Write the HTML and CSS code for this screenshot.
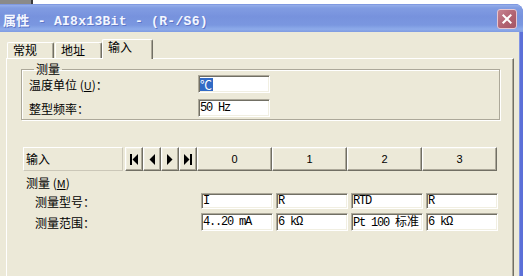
FILE: index.html
```html
<!DOCTYPE html>
<html lang="zh">
<head>
<meta charset="utf-8">
<link rel="stylesheet" href="styles.css">
</head>
<body>
<div class="topstrip"><span class="ts-gray"></span><span class="ts-line"></span></div>
<div class="window">
  <div class="titlebar">
    <span class="title">属性 - AI8x13Bit - (R-/S6)</span>
    <span class="close">
      <svg width="20" height="20" viewBox="0 0 20 20"><path d="M6 6 L14 14 M14 6 L6 14" stroke="#fff" stroke-width="2.2" stroke-linecap="square"/></svg>
    </span>
  </div>
  <div class="client">
    <div class="tabs">
      <div class="tab tab-1">常规</div>
      <div class="tab tab-2">地址</div>
      <div class="tab tab-active">输入</div>
    </div>
    <div class="pane">
      <fieldset class="group">
        <legend>测量</legend>
        <div class="form">
          <span class="lbl">温度单位 (<u>U</u>)：</span><span class="field"><span class="sel">℃</span></span>
          <span class="lbl">整型频率：</span><span class="field">50 Hz</span>
        </div>
      </fieldset>
      <div class="navrow">
        <div class="hcell">输入</div>
        <div class="navbtns">
          <div class="btn nav"><svg width="8" height="11" viewBox="0 0 8 11"><rect x="0" y="0" width="2" height="11"/><polygon points="8,0 8,11 2.5,5.5"/></svg></div>
          <div class="btn nav"><svg width="6" height="11" viewBox="0 0 6 11"><polygon points="6,0 6,11 0.5,5.5"/></svg></div>
          <div class="btn nav"><svg width="6" height="11" viewBox="0 0 6 11"><polygon points="0,0 0,11 5.5,5.5"/></svg></div>
          <div class="btn nav"><svg width="8" height="11" viewBox="0 0 8 11"><polygon points="0,0 0,11 5.5,5.5"/><rect x="6" y="0" width="2" height="11"/></svg></div>
        </div>
        <div class="btn col">0</div>
        <div class="btn col">1</div>
        <div class="btn col">2</div>
        <div class="btn col">3</div>
      </div>
      <div class="section">测量 (<u>M</u>)</div>
      <div class="table">
        <span class="lbl">测量型号：</span>
        <span class="field">I</span>
        <span class="field">R</span>
        <span class="field">RTD</span>
        <span class="field">R</span>
        <span class="lbl">测量范围：</span>
        <span class="field">4..20 mA</span>
        <span class="field">6 kΩ</span>
        <span class="field"><span class="mix">Pt 100 <span class="cjk">标准</span></span></span>
        <span class="field">6 kΩ</span>
      </div>
    </div>
  </div>
</div>
</body>
</html>
```
FILE: styles.css
```css
html, body {
  margin: 0;
  padding: 0;
}
body {
  width: 523px;
  height: 276px;
  overflow: hidden;
  background: #fff;
  font-family: "Noto Sans CJK SC", "Liberation Sans", sans-serif;
  font-size: 12px;
  color: #000;
}
.topstrip {
  height: 4px;
  display: flex;
}
.ts-gray {
  width: 31px;
  background: #8a8a8a;
}
.ts-line {
  width: 2px;
  background: #3c3c3c;
}
.window {
  height: 272px;
  display: flex;
  flex-direction: column;
  background: #5c70d8;
  border-top-right-radius: 8px;
  overflow: hidden;
}
.titlebar {
  flex: none;
  height: 28px;
  box-sizing: border-box;
  display: flex;
  align-items: center;
  justify-content: space-between;
  padding: 0 6px 0 3px;
  background: linear-gradient(to bottom, #6a84d6 0, #95aeea 1px, #819ce2 4px, #7792dd 45%, #7a97e0 75%, #8dabea 90%, #7f9be1 100%);
}
.title {
  font-family: "Liberation Mono", "Noto Sans CJK SC", monospace;
  font-weight: bold;
  font-size: 13px;
  letter-spacing: 0.3px;
  color: #f4f7ff;
  text-shadow: 1px 1px 0 #5f77c8;
  white-space: pre;
  margin-top: 2px;
}
.close {
  width: 20px;
  height: 20px;
  margin-top: 2px;
  box-sizing: border-box;
  border: 1px solid #e6c6d0;
  border-radius: 3px;
  background: linear-gradient(135deg, #c58290 0%, #b0606f 60%, #a45666 100%);
  display: flex;
  align-items: center;
  justify-content: center;
}
.close svg {
  width: 18px;
  height: 18px;
}
.client {
  flex: 1;
  margin-right: 4px;
  background: #ece9d8;
  display: flex;
  flex-direction: column;
  box-shadow: 1px 0 0 #8094e6;
}
.tabs {
  height: 26px;
  box-sizing: border-box;
  display: flex;
  align-items: flex-end;
  padding-left: 7px;
}
.tab {
  box-sizing: border-box;
  height: 16px;
  line-height: 14px;
  padding-left: 5px;
  border-top: 1px solid #fff;
  border-left: 1px solid #fff;
  border-right: 1px solid #716f64;
  box-shadow: inset -1px 0 0 #aca899;
  border-radius: 2px 2px 0 0;
  background: #ece9d8;
}
.tab-1 {
  width: 47px;
  margin-right: 1px;
}
.tab-2 {
  width: 47px;
}
.tab-active {
  width: 51px;
  height: 20px;
  margin-bottom: -1px;
  position: relative;
  z-index: 1;
}
.pane {
  flex: 1;
  margin: 0 5px 0 6px;
  border-top: 1px solid #fff;
  border-left: 1px solid #fff;
  border-right: 1px solid #716f64;
  box-shadow: inset -1px 0 0 #aca899;
  display: flex;
  flex-direction: column;
}
.group {
  margin: 4px 13px 0 14px;
  padding: 0 0 2px 7px;
  min-width: 0;
  border: 1px solid #aca899;
  box-shadow: inset 1px 1px 0 #fff, 1px 1px 0 #fff;
}
.group legend {
  margin-left: 5px;
  padding: 0 2px;
  line-height: 12px;
}
.form {
  margin-top: 0;
  display: grid;
  grid-template-columns: 169px 72px;
  grid-auto-rows: 18px;
  row-gap: 6px;
  align-items: center;
}
.lbl {
  line-height: 12px;
  margin-top: 2px;
  white-space: nowrap;
}
.lbl u {
  font-size: 11px;
}
.field {
  box-sizing: border-box;
  height: 100%;
  background: #fff;
  border: 1px solid;
  border-color: #aca899 #fff #fff #aca899;
  box-shadow: inset 1px 1px 0 #716f64, inset -1px -1px 0 #f1efe2;
  padding-left: 1px;
  display: flex;
  align-items: center;
  font-family: "Liberation Mono", monospace;
  font-size: 12px;
  letter-spacing: -1.2px;
  white-space: pre;
  overflow: hidden;
}
.sel {
  background: #316ac5;
  color: #fff;
  font-family: "Noto Sans CJK SC", sans-serif;
  letter-spacing: 0;
  line-height: 13px;
  padding-right: 1px;
}
.mix {
  line-height: 14px;
}
.cjk {
  font-family: "Noto Sans CJK SC", sans-serif;
  letter-spacing: 0;
  line-height: 12px;
}
.navrow {
  margin: 27px 0 0 16px;
  height: 24px;
  display: flex;
}
.hcell {
  width: 100px;
  margin-right: 2px;
  box-sizing: border-box;
  border: 1px solid;
  border-color: #fff #cbc7b8 #cbc7b8 #fff;
  padding-left: 2px;
  line-height: 22px;
}
.navbtns {
  display: flex;
}
.btn {
  box-sizing: border-box;
  border: 1px solid;
  border-color: #fff #716f64 #716f64 #fff;
  box-shadow: inset -1px -1px 0 #aca899, inset 1px 1px 0 #f1efe2;
  background: #ece9d8;
  display: flex;
  align-items: center;
  justify-content: center;
}
.nav {
  width: 18px;
}
.nav svg {
  fill: #000;
}
.col {
  width: 75px;
  font-family: "Liberation Sans", sans-serif;
  font-size: 11px;
}
.section {
  margin: 4px 0 0 19px;
  line-height: 16px;
}
.section u {
  font-size: 11px;
}
.table {
  margin: 2px 0 0 28px;
  display: grid;
  grid-template-columns: 163px 72px 72px 72px 72px;
  grid-template-rows: 16px 18px;
  column-gap: 3px;
  row-gap: 4px;
  align-items: center;
}
```
